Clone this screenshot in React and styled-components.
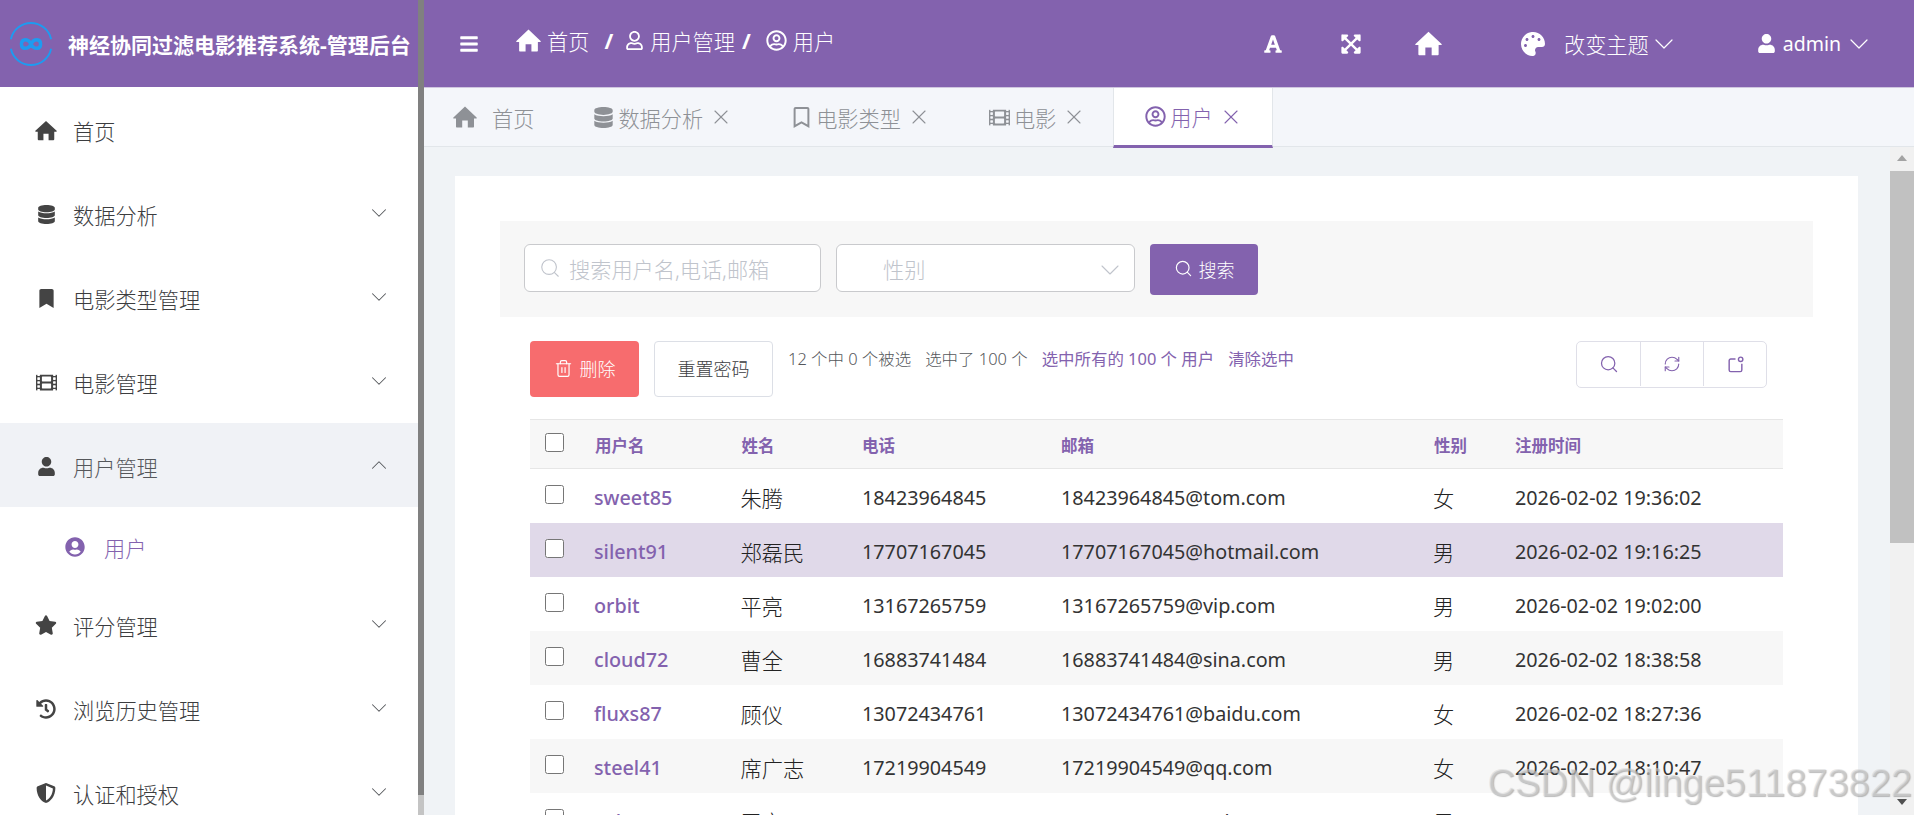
import styled, {createGlobalStyle} from "styled-components";
import {
    FaDatabase, FaBookmark, FaRegBookmark, FaFilm, FaUser, FaRegUser, FaStar, FaHistory,
    FaShieldAlt, FaUserCircle, FaRegUserCircle, FaFont, FaExpandArrowsAlt, FaPalette, FaBars,
} from "react-icons/fa";
import {ChevronDown, ChevronUp, Search, RefreshCw, Trash2, X} from "lucide-react";

const purple = "#8362ae";
const sans = `"Noto Sans", "Noto Sans CJK SC", sans-serif`;

const HomeIcon = ({size}) => (
    <svg width={size} height={size} viewBox="0 0 24 24" fill="currentColor">
        <path fillRule="evenodd" d="M12 1.5 23.6 12.4c.4.4.1 1-.4 1H21V21.500c0 .6-.4 1-1 1H14.800V15.500H9.200V22.500H4c-.6 0-1-.4-1-1V13.400H.8c-.5 0-.8-.6-.4-1z"/>
    </svg>
);

const menu = [
    {icon: HomeIcon, label: "首页", size: 23},
    {icon: FaDatabase, label: "数据分析", arrow: true, size: 19},
    {icon: FaBookmark, label: "电影类型管理", arrow: true, size: 19},
    {icon: FaFilm, label: "电影管理", arrow: true, size: 21},
    {icon: FaUser, label: "用户管理", arrow: true, open: true, size: 19},
    {icon: FaStar, label: "评分管理", arrow: true, size: 22},
    {icon: FaHistory, label: "浏览历史管理", arrow: true, size: 20},
    {icon: FaShieldAlt, label: "认证和授权", arrow: true, size: 20},
];

const tabs = [
    {icon: HomeIcon, label: "首页", size: 24, gap: 15, home: true},
    {icon: FaDatabase, label: "数据分析", size: 21},
    {icon: FaRegBookmark, label: "电影类型", size: 21},
    {icon: FaFilm, label: "电影", size: 21},
    {icon: FaRegUserCircle, label: "用户", size: 21, active: true},
];

const users = [
    ["sweet85", "朱腾", "18423964845", "18423964845@tom.com", "女", "2026-02-02 19:36:02"],
    ["silent91", "郑磊民", "17707167045", "17707167045@hotmail.com", "男", "2026-02-02 19:16:25"],
    ["orbit", "平亮", "13167265759", "13167265759@vip.com", "男", "2026-02-02 19:02:00"],
    ["cloud72", "曹全", "16883741484", "16883741484@sina.com", "男", "2026-02-02 18:38:58"],
    ["fluxs87", "顾仪", "13072434761", "13072434761@baidu.com", "女", "2026-02-02 18:27:36"],
    ["steel41", "席广志", "17219904549", "17219904549@qq.com", "女", "2026-02-02 18:10:47"],
    ["solar56", "罗文", "15610369360", "15610369360@sohu.com", "男", "2026-02-02 17:59:06"],
];

const Logo = () => (
    <svg width="46" height="46" viewBox="0 0 48 48" fill="none" stroke="#1e9bf0">
        <path d="M3 19A21.5 21.5 0 0 1 45 19" strokeWidth="2"/>
        <path d="M3 29A21.5 21.5 0 0 0 45 29" strokeWidth="2"/>
        <path d="M24 24C21 18 14 18 14 24C14 30 21 30 24 24C27 18 34 18 34 24C34 30 27 30 24 24Z" strokeWidth="3.6"/>
    </svg>
);

const NoteIcon = () => (
    <svg width="19" height="19" viewBox="0 0 24 24" fill="none" stroke={purple} strokeWidth="1.8">
        <path d="M12 5H6a2 2 0 0 0-2 2v12a2 2 0 0 0 2 2h12a2 2 0 0 0 2-2v-8"/>
        <circle cx="18.500" cy="5.500" r="2.800"/>
    </svg>
);

const App = () => {
    return (
        <Page>
            <GlobalStyle/>
            <Sidebar>
                <SideBody>
                    <Brand>
                        <Logo/>
                        <BrandName>神经协同过滤电影推荐系统-管理后台</BrandName>
                    </Brand>
                    {menu.map((item) => (
                        <div key={item.label}>
                            <MenuRow $open={item.open}>
                                <MenuIcon><item.icon size={item.size}/></MenuIcon>
                                {item.label}
                                {item.arrow && (
                                    <MenuArrow>
                                        {item.open ? <ChevronUp size={26} strokeWidth={0.95}/> : <ChevronDown size={26} strokeWidth={0.95}/>}
                                    </MenuArrow>
                                )}
                            </MenuRow>
                            {item.open && (
                                <SubRow>
                                    <FaUserCircle size={20}/>
                                    用户
                                </SubRow>
                            )}
                        </div>
                    ))}
                </SideBody>
                <SideRail/>
            </Sidebar>
            <Main>
                <TopBar>
                    <FaBars size={20}/>
                    <Crumbs>
                        <HomeIcon size={25}/>
                        <CrumbText>首页</CrumbText>
                        <Slash $left={15} $right={12}>/</Slash>
                        <FaRegUser size={19}/>
                        <CrumbText>用户管理</CrumbText>
                        <Slash $left={7} $right={15}>/</Slash>
                        <FaRegUserCircle size={21}/>
                        <CrumbText>用户</CrumbText>
                    </Crumbs>
                    <TopRight>
                        <ToolIcon><FaFont size={20}/></ToolIcon>
                        <ToolIcon><FaExpandArrowsAlt size={22}/></ToolIcon>
                        <ToolIcon><HomeIcon size={27}/></ToolIcon>
                        <ThemeMenu>
                            <FaPalette size={24}/>
                            <span>改变主题</span>
                            <ChevronDown size={32} strokeWidth={0.9}/>
                        </ThemeMenu>
                        <UserMenu>
                            <FaUser size={19}/>
                            <span>admin</span>
                            <ChevronDown size={32} strokeWidth={0.9}/>
                        </UserMenu>
                    </TopRight>
                </TopBar>
                <TabBar>
                    {tabs.map((tab) => (
                        <Tab key={tab.label} $active={tab.active} $home={tab.home}>
                            <tab.icon size={tab.size}/>
                            <TabText $gap={tab.gap}>{tab.label}</TabText>
                            {!tab.home && <TabClose size={24} strokeWidth={1.1}/>}
                        </Tab>
                    ))}
                </TabBar>
                <Body>
                    <Content>
                        <Card>
                            <SearchBar>
                                <SearchInput>
                                    <Search size={22} strokeWidth={1.2}/>
                                    搜索用户名,电话,邮箱
                                </SearchInput>
                                <SelectBox>
                                    性别
                                    <SelectArrow size={32} strokeWidth={0.8}/>
                                </SelectBox>
                                <SearchButton>
                                    <Search size={19} strokeWidth={1.5}/>
                                    搜索
                                </SearchButton>
                            </SearchBar>
                            <Toolbar>
                                <DangerButton>
                                    <Trash2 size={19} strokeWidth={1.5}/>
                                    删除
                                </DangerButton>
                                <PlainButton>重置密码</PlainButton>
                                <Status>
                                    <span>12 个中 0 个被选</span>
                                    <span>选中了 100 个</span>
                                    <StatusLink>选中所有的 100 个 用户</StatusLink>
                                    <StatusLink>清除选中</StatusLink>
                                </Status>
                                <IconGroup>
                                    <IconCell><Search size={20} strokeWidth={1.5}/></IconCell>
                                    <IconCell><RefreshCw size={18} strokeWidth={1.5}/></IconCell>
                                    <IconCell><NoteIcon/></IconCell>
                                </IconGroup>
                            </Toolbar>
                            <Table>
                                <HeadRow>
                                    <Box type="checkbox"/>
                                    <span>用户名</span>
                                    <span>姓名</span>
                                    <span>电话</span>
                                    <span>邮箱</span>
                                    <span>性别</span>
                                    <span>注册时间</span>
                                </HeadRow>
                                {users.map((user, index) => (
                                    <Row key={user[0]} $selected={index === 1} $striped={index === 3 || index === 5}>
                                        <Box type="checkbox"/>
                                        <UserName>{user[0]}</UserName>
                                        <CjkCell>{user[1]}</CjkCell>
                                        <span>{user[2]}</span>
                                        <span>{user[3]}</span>
                                        <CjkCell>{user[4]}</CjkCell>
                                        <span>{user[5]}</span>
                                    </Row>
                                ))}
                            </Table>
                        </Card>
                    </Content>
                    <ScrollRail>
                        <ArrowUp/>
                        <ScrollThumb/>
                        <ArrowDown/>
                    </ScrollRail>
                </Body>
            </Main>
            <Watermark>CSDN @linge511873822</Watermark>
        </Page>
    );
};

const GlobalStyle = createGlobalStyle`
  html, body {
    margin: 0;
    height: 100%;
    overflow: hidden;
  }

  * {
    box-sizing: border-box;
  }
`;

const Page = styled.div`
  position: relative;
  display: flex;
  width: 1914px;
  height: 815px;
  overflow: hidden;
  font-family: ${sans};
  font-size: 21.2px;
  background: #f0f3f6;
`;

const Sidebar = styled.aside`
  display: flex;
  flex: 0 0 424px;
  background: #fff;
`;

const SideBody = styled.div`
  flex: 1;
  overflow: hidden;
`;

const SideRail = styled.div`
  flex: 0 0 6px;
  background: linear-gradient(#808080 795px, #c4c4c4 795px);
`;

const Brand = styled.div`
  display: flex;
  align-items: center;
  gap: 14px;
  height: 87px;
  padding-left: 8px;
  background: ${purple};
`;

const BrandName = styled.span`
  color: #fff;
  font-size: 21px;
  font-weight: 700;
  white-space: nowrap;
`;

const MenuRow = styled.div`
  display: flex;
  align-items: center;
  height: 84px;
  padding: 2px 32px 0 35px;
  color: ${(props) => (props.$open ? "#55575b" : "#3c3d3f")};
  background: ${(props) => (props.$open ? "#f0f2f6" : "#fff")};
  font-weight: 300;
`;

const MenuIcon = styled.span`
  display: flex;
  justify-content: center;
  flex: 0 0 22px;
  min-width: 0;
  margin-right: 16px;
  color: #444;
`;

const MenuArrow = styled.span`
  display: flex;
  margin-left: auto;
  margin-right: -6px;
  margin-bottom: 2px;
  color: #55575b;
`;

const SubRow = styled.div`
  display: flex;
  align-items: center;
  gap: 19px;
  height: 75px;
  padding: 5px 0 0 65px;
  color: ${purple};
  font-weight: 300;
`;

const Main = styled.div`
  display: flex;
  flex-direction: column;
  flex: 1;
  min-width: 0;
`;

const TopBar = styled.header`
  display: flex;
  align-items: center;
  height: 87px;
  padding-left: 35px;
  color: #fff;
  background: ${purple};
`;

const Crumbs = styled.nav`
  display: flex;
  align-items: center;
  margin: 0 0 7px 37px;
`;

const CrumbText = styled.span`
  margin-left: 6px;
  font-weight: 300;
`;

const Slash = styled.span`
  margin: 0 ${(props) => props.$right}px 0 ${(props) => props.$left}px;
  font-weight: 700;
`;

const TopRight = styled.div`
  display: flex;
  align-items: center;
  margin-left: auto;
  padding-right: 39px;
`;

const ToolIcon = styled.span`
  display: flex;
  justify-content: center;
  width: 78px;
`;

const ThemeMenu = styled.div`
  display: flex;
  align-items: center;
  gap: 19px;
  margin-left: 53px;
  font-weight: 300;

  svg:last-child {
    margin-left: -20px;
  }
`;

const UserMenu = styled.div`
  display: flex;
  align-items: center;
  gap: 7px;
  margin-left: 77px;
  font-size: 19.5px;

  svg:last-child {
    margin-left: -5px;
  }
`;

const TabBar = styled.div`
  display: flex;
  height: 60px;
  background: #f4f6fa;
  border-top: 1px solid #cfc6df;
  border-bottom: 1px solid #e2e6ea;
`;

const Tab = styled.div`
  display: flex;
  align-items: center;
  height: ${(props) => (props.$active ? "60px" : "58px")};
  padding-left: ${(props) => (props.$home ? "29px" : "31px")};
  padding-right: ${(props) => (props.$home ? "28px" : props.$active ? "29px" : "27px")};
  color: ${(props) => (props.$active ? purple : "#8e9196")};
  font-weight: 300;
  background: ${(props) => (props.$active ? "#fff" : "transparent")};
  border-left: ${(props) => (props.$active ? "1px solid #e2e6ea" : "0")};
  border-right: ${(props) => (props.$active ? "1px solid #e2e6ea" : "0")};
  border-bottom: ${(props) => (props.$active ? `3px solid ${purple}` : "0")};
`;

const TabText = styled.span`
  margin-left: ${(props) => (props.$gap ? props.$gap : 4)}px;
`;

const TabClose = styled(X)`
  margin-left: 6px;
`;

const Body = styled.div`
  display: flex;
  flex: 1;
  min-height: 0;
`;

const Content = styled.main`
  flex: 1;
  min-width: 0;
  padding: 29px 32px 0 31px;
  overflow: hidden;
`;

const Card = styled.section`
  padding: 45px 45px 60px;
  background: #fff;
`;

const SearchBar = styled.div`
  display: flex;
  gap: 15px;
  height: 96px;
  padding: 23px 0 0 24px;
  background: #f7f7f7;
`;

const SearchInput = styled.div`
  display: flex;
  align-items: center;
  gap: 8px;
  width: 297px;
  height: 48px;
  padding-left: 14px;
  color: #c0c4cc;
  font-weight: 300;
  white-space: nowrap;
  background: #fff;
  border: 1px solid #c9cacd;
  border-radius: 6px;
`;

const SelectBox = styled(SearchInput)`
  width: 299px;
  padding-left: 46px;
`;

const SelectArrow = styled(ChevronDown)`
  margin-left: auto;
  margin-right: 8px;
  margin-top: 3px;
`;

const SearchButton = styled.button`
  display: flex;
  align-items: center;
  justify-content: center;
  gap: 6px;
  width: 108px;
  height: 51px;
  padding: 0 0 2px;
  color: #fff;
  font-family: inherit;
  font-size: 18px;
  font-weight: 300;
  background: ${purple};
  border: 0;
  border-radius: 4px;
`;

const Toolbar = styled.div`
  display: flex;
  height: 57px;
  margin: 24px 46px 21px 30px;
`;

const DangerButton = styled(SearchButton)`
  gap: 7px;
  width: 109px;
  height: 56px;
  background: #f76c6e;
`;

const PlainButton = styled.button`
  width: 119px;
  height: 56px;
  margin-left: 15px;
  padding: 0 0 2px;
  color: #3c3d3f;
  font-family: inherit;
  font-size: 18px;
  font-weight: 300;
  background: #fff;
  border: 1px solid #dcdfe6;
  border-radius: 4px;
`;

const Status = styled.div`
  display: flex;
  gap: 14px;
  margin: 5px 0 0 15px;
  color: #55575b;
  font-size: 16.45px;
  font-weight: 300;
  line-height: 26px;
  white-space: nowrap;
`;

const StatusLink = styled.span`
  color: ${purple};
  font-weight: 400;
`;

const IconGroup = styled.div`
  display: flex;
  height: 47px;
  margin-left: auto;
  padding-bottom: 1px;
  border: 1px solid #dfdfe8;
  border-radius: 5px;
`;

const IconCell = styled.span`
  display: flex;
  align-items: center;
  justify-content: center;
  width: 63px;
  color: ${purple};

  & + & {
    border-left: 1px solid #dfdfe8;
  }
`;

const Table = styled.div`
  margin-left: 30px;
  margin-right: 30px;
  color: #333;
  font-size: 19.75px;
`;

const columns = "65px 146.500px 120.500px 199px 373px 81px 1fr";

const HeadRow = styled.div`
  display: grid;
  grid-template-columns: ${columns};
  align-items: center;
  height: 50px;
  padding-top: 2px;
  color: ${purple};
  font-size: 16.500px;
  font-weight: 700;
  background: #f7f7f7;
  border-top: 1px solid #e6e6e6;
  border-bottom: 1px solid #e6e6e6;
`;

const Row = styled.div`
  display: grid;
  grid-template-columns: ${columns};
  align-items: center;
  height: 54px;
  padding-top: 2px;
  background: ${(props) => (props.$selected ? "#e0d9e9" : props.$striped ? "#f7f7f7" : "#fff")};
`;

const Box = styled.input`
  width: 19px;
  height: 19px;
  margin: 0 0 5px 15px;
`;

const UserName = styled.span`
  margin-left: -1px;
  color: ${purple};
  font-weight: 500;
`;

const CjkCell = styled.span`
  margin-left: -1px;
  color: #222;
  font-size: 21.2px;
  font-weight: 300;
`;

const ScrollRail = styled.div`
  display: flex;
  flex-direction: column;
  flex: 0 0 24px;
  background: #f1f1f1;
`;

const ArrowUp = styled.div`
  width: 0;
  height: 0;
  margin: 8px auto 0;
  border-left: 5px solid transparent;
  border-right: 5px solid transparent;
  border-bottom: 6px solid #a3a3a3;
`;

const ScrollThumb = styled.div`
  height: 372px;
  margin-top: 10px;
  background: #c1c1c1;
`;

const ArrowDown = styled.div`
  width: 0;
  height: 0;
  margin: auto auto 10px;
  border-left: 5px solid transparent;
  border-right: 5px solid transparent;
  border-top: 6px solid #505050;
`;

const Watermark = styled.div`
  position: absolute;
  right: 2px;
  bottom: 10px;
  color: rgba(215, 215, 215, 0.5);
  font-family: "Liberation Sans", sans-serif;
  font-size: 38px;
  line-height: 44px;
  white-space: nowrap;
  text-shadow: 1px 1px 1px rgba(120, 120, 120, 0.5);
`;

export default App;
